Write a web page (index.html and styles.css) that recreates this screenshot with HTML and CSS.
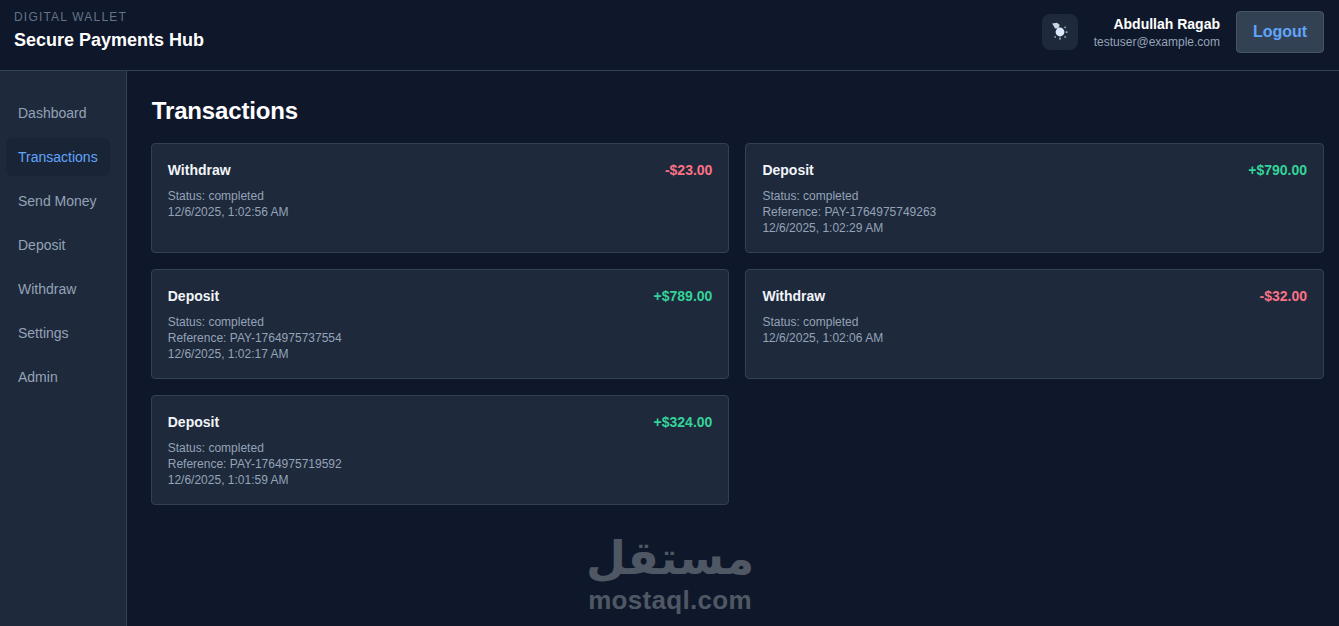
FILE: index.html
```html
<!DOCTYPE html>
<html lang="en">
<head>
    <meta charset="UTF-8">
    <meta name="viewport" content="width=device-width, initial-scale=1.0">
    <title>Secure Payments Hub</title>
    <link rel="stylesheet" href="styles.css">
</head>
<body>
    <header class="topbar">
        <div class="brand">
            <div class="brand-label">DIGITAL WALLET</div>
            <div class="brand-name">Secure Payments Hub</div>
        </div>
        <div class="topbar-right">
            <button class="theme-btn" type="button" aria-label="Toggle theme">
                <svg width="20" height="20" viewBox="0 0 20 20">
                    <path d="M2.2 1.6 L7 0.8 L9.8 3 L8.2 6.4 L5 6.6 Z" fill="#cbd5e1"/>
                    <circle cx="10" cy="10" r="4.4" fill="#dbeafe"/>
                    <g fill="#a9b8c9">
                        <rect x="9.3" y="15.6" width="1.5" height="2"/>
                        <rect x="15.6" y="9.4" width="2" height="1.4"/>
                        <rect x="14.4" y="4.6" width="1.5" height="1.5"/>
                        <rect x="14.4" y="14.2" width="1.5" height="1.5"/>
                        <rect x="4.4" y="14.2" width="1.5" height="1.5"/>
                    </g>
                </svg>
            </button>
            <div class="user">
                <div class="user-name">Abdullah Ragab</div>
                <div class="user-email">testuser@example.com</div>
            </div>
            <button class="logout" type="button">Logout</button>
        </div>
    </header>

    <div class="layout">
        <nav class="sidebar">
            <a class="nav-link" href="#">Dashboard</a>
            <a class="nav-link active" href="#">Transactions</a>
            <a class="nav-link" href="#">Send Money</a>
            <a class="nav-link" href="#">Deposit</a>
            <a class="nav-link" href="#">Withdraw</a>
            <a class="nav-link" href="#">Settings</a>
            <a class="nav-link" href="#">Admin</a>
        </nav>

        <main class="content">
            <h1>Transactions</h1>
            <div class="tx-grid">
                <div class="tx-card">
                    <div class="tx-head"><span class="tx-type">Withdraw</span><span class="tx-amount out">-$23.00</span></div>
                    <div class="tx-meta">Status: completed</div>
                    <div class="tx-meta">12/6/2025, 1:02:56 AM</div>
                </div>
                <div class="tx-card">
                    <div class="tx-head"><span class="tx-type">Deposit</span><span class="tx-amount in">+$790.00</span></div>
                    <div class="tx-meta">Status: completed</div>
                    <div class="tx-meta">Reference: PAY-1764975749263</div>
                    <div class="tx-meta">12/6/2025, 1:02:29 AM</div>
                </div>
                <div class="tx-card">
                    <div class="tx-head"><span class="tx-type">Deposit</span><span class="tx-amount in">+$789.00</span></div>
                    <div class="tx-meta">Status: completed</div>
                    <div class="tx-meta">Reference: PAY-1764975737554</div>
                    <div class="tx-meta">12/6/2025, 1:02:17 AM</div>
                </div>
                <div class="tx-card">
                    <div class="tx-head"><span class="tx-type">Withdraw</span><span class="tx-amount out">-$32.00</span></div>
                    <div class="tx-meta">Status: completed</div>
                    <div class="tx-meta">12/6/2025, 1:02:06 AM</div>
                </div>
                <div class="tx-card">
                    <div class="tx-head"><span class="tx-type">Deposit</span><span class="tx-amount in">+$324.00</span></div>
                    <div class="tx-meta">Status: completed</div>
                    <div class="tx-meta">Reference: PAY-1764975719592</div>
                    <div class="tx-meta">12/6/2025, 1:01:59 AM</div>
                </div>
            </div>
        </main>
    </div>

    <!-- watermark -->
    <div class="watermark">
        <div class="watermark-ar" lang="ar" dir="rtl">مستقل</div>
        <div class="watermark-en">mostaql.com</div>
    </div>
</body>
</html>
```

FILE: styles.css
```css
* {
    box-sizing: border-box;
}
html, body {
    height: 100%;
}
body {
    margin: 0;
    background-color: #0f172a;
    color: #fff;
    font-family: "Liberation Sans", Arial, sans-serif;
    overflow: hidden;
}
.topbar {
    height: 71px;
    display: flex;
    align-items: center;
    justify-content: space-between;
    padding: 0 15px 6px 14px;
    border-bottom: 1px solid #334155;
}
.brand {
    margin-top: -3px;
}
.brand-label {
    font-size: 12px;
    line-height: 16px;
    letter-spacing: 1.2px;
    color: #64748b;
}
.brand-name {
    margin-top: 2px;
    font-size: 18px;
    line-height: 26px;
    font-weight: 700;
}
.topbar-right {
    display: flex;
    align-items: center;
}
.theme-btn {
    width: 36px;
    height: 36px;
    display: flex;
    align-items: center;
    justify-content: center;
    padding: 0;
    margin-right: 16px;
    border: none;
    border-radius: 8px;
    background-color: #1e293b;
}
.user {
    text-align: right;
    margin-right: 16px;
}
.user-name {
    font-size: 14px;
    line-height: 20px;
    font-weight: 700;
}
.user-email {
    font-size: 12px;
    line-height: 16px;
    color: #94a3b8;
}
.logout {
    width: 88px;
    height: 42px;
    padding: 0;
    border: 1px solid #475569;
    border-radius: 4px;
    background-color: #334155;
    color: #60a5fa;
    font-family: inherit;
    font-size: 16px;
    font-weight: 700;
}
.layout {
    display: flex;
    height: calc(100% - 71px);
}
.sidebar {
    width: 127px;
    flex-shrink: 0;
    padding: 20px 16px 0 6px;
    background-color: #1e293b;
    border-right: 1px solid #334155;
    display: flex;
    flex-direction: column;
}
.nav-link {
    display: block;
    height: 38px;
    margin: 3px 0;
    padding: 0 12px;
    line-height: 38px;
    border-radius: 6px;
    color: #94a3b8;
    font-size: 14px;
    text-decoration: none;
    white-space: nowrap;
}
.nav-link.active {
    background-color: #0f172a40;
    color: #60a5fa;
}
.content {
    flex: 1;
    padding: 24px 15px 0 23.75px;
}
.content h1 {
    margin: 0 0 16px 1px;
    font-size: 24px;
    line-height: 32px;
    font-weight: 700;
    letter-spacing: -0.15px;
}
.tx-grid {
    display: grid;
    grid-template-columns: 1fr 1fr;
    grid-auto-rows: 110px;
    gap: 16px;
}
.tx-card {
    padding: 16px;
    background-color: #1e293b;
    border: 1px solid #334155;
    border-radius: 4px;
}
.tx-head {
    display: flex;
    justify-content: space-between;
    margin-bottom: 8px;
    font-size: 14px;
    line-height: 20px;
    font-weight: 700;
}
.tx-type {
    color: #f1f5f9;
}
.tx-amount.in {
    color: #34d399;
}
.tx-amount.out {
    color: #fb7185;
}
.tx-meta {
    font-size: 12px;
    line-height: 16px;
    color: #94a3b8;
}
.watermark {
    position: absolute;
    left: 570px;
    top: 531px;
    width: 200px;
    text-align: center;
    color: #4f5765;
}
.watermark-ar {
    font-family: "DejaVu Sans", sans-serif;
    font-size: 46px;
    line-height: 54px;
    font-weight: 700;
}
.watermark-en {
    font-size: 26px;
    line-height: 30px;
    font-weight: 700;
    letter-spacing: 0.3px;
}
```
